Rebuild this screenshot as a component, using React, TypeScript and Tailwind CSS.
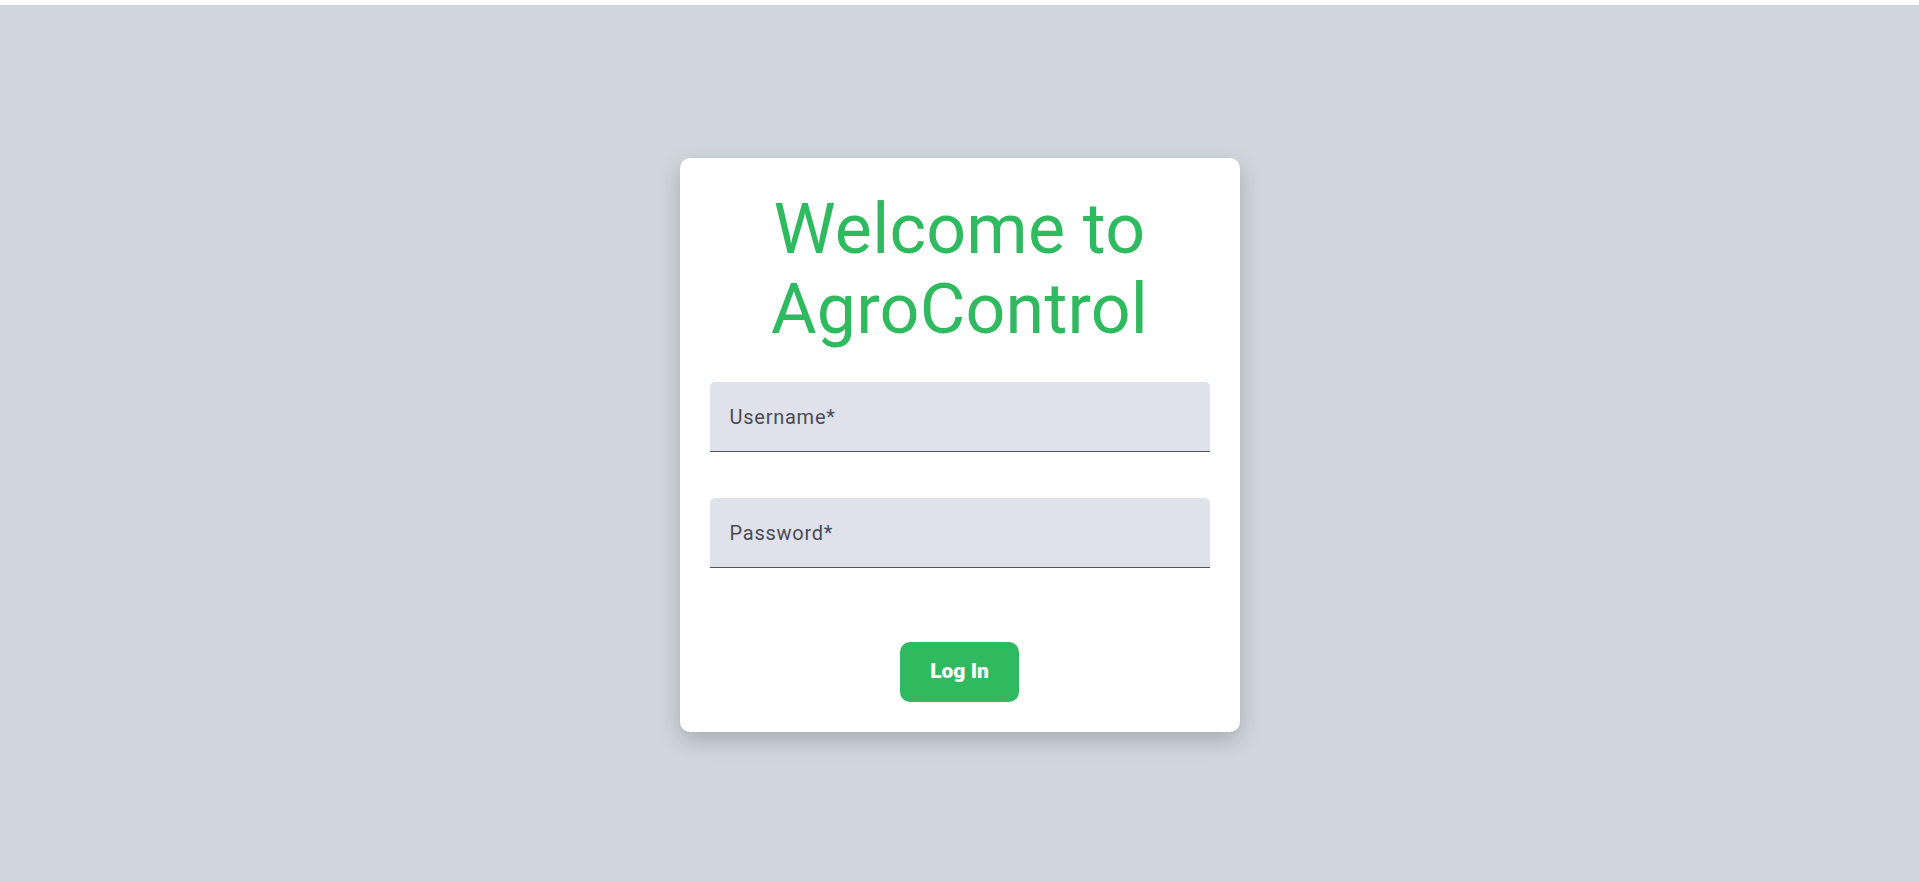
import React from "react";

function Field({ label, type }: { label: string; type: string }) {
  return (
    <label className="relative block h-[70px] w-full rounded-t-[5px] bg-[#dfe2eb] border-b border-[#50505e]">
      <span className="absolute left-[20px] top-[21px] text-[20px] leading-[28px] tracking-[0.75px] text-[#4a4a55]">
        {label}
      </span>
      <input type={type} className="h-full w-full bg-transparent outline-none px-[20px] pt-[20px] text-[20px]" aria-label={label} />
    </label>
  );
}

export default function App() {
  return (
    <div className="bg-white pt-[5px]" style={{ fontFamily: "Roboto, 'Noto Sans', sans-serif" }}>
      <div className="h-[876px] bg-[#d1d5de] flex items-center justify-center pt-[3px]">
        <div className="w-[560px] bg-white rounded-[10px] shadow-[0_8px_22px_rgba(0,0,0,0.2)] px-[30px] pb-[30px] pt-[31px] flex flex-col">
          <h1 className="text-center text-[70px] leading-[80px] font-normal tracking-[0.2px] text-[#2fba5f]">
            Welcome to
            <br />
            AgroControl
          </h1>
          <div className="mt-[33px] flex flex-col gap-[46px]">
            <Field label="Username*" type="text" />
            <Field label="Password*" type="password" />
          </div>
          <div className="mt-[74px] flex justify-center">
            <button className="h-[60px] w-[119px] rounded-[10px] bg-[#2fba5f] text-white text-[21px] font-black">
              Log In
            </button>
          </div>
        </div>
      </div>
    </div>
  );
}
